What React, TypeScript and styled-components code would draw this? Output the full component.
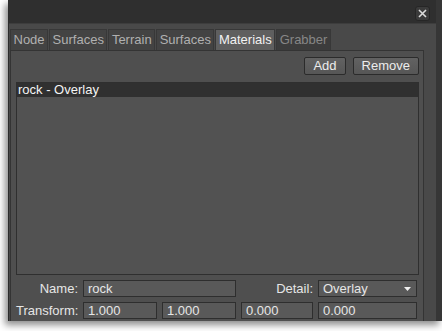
import styled, { createGlobalStyle } from 'styled-components';

const GlobalStyle = createGlobalStyle`
  html, body {
    margin: 0;
    padding: 0;
    background: #ffffff;
  }
  body {
    font-family: 'Liberation Sans', Arial, sans-serif;
    font-size: 13px;
    height: 331px;
  }
`;

const TABS = [
  { label: 'Node', state: 'normal' },
  { label: 'Surfaces', state: 'normal' },
  { label: 'Terrain', state: 'normal' },
  { label: 'Surfaces', state: 'normal' },
  { label: 'Materials', state: 'active' },
  { label: 'Grabber', state: 'disabled' },
] as const;

type TabState = (typeof TABS)[number]['state'];

const App = () => {
  return (
    <>
      <GlobalStyle />
      <Window>
        <TitleBar>
          <CloseButton>
            <svg width="9" height="9" viewBox="0 0 9 9">
              <path d="M1 1L8 8M8 1L1 8" stroke="#dcdcdc" strokeWidth="1.6" />
            </svg>
          </CloseButton>
        </TitleBar>
        <Body>
          <TabBar>
            {TABS.map((tab, i) => (
              <Tab key={i} $state={tab.state}>
                {tab.label}
              </Tab>
            ))}
          </TabBar>
          <Pane>
            <Toolbar>
              <Button>Add</Button>
              <Button>Remove</Button>
            </Toolbar>
            <MaterialList>
              <ListRow $selected>rock - Overlay</ListRow>
            </MaterialList>
            <Form>
              <Label>Name:</Label>
              <Field $span={2}>rock</Field>
              <Label>Detail:</Label>
              <Select>
                <span>Overlay</span>
                <svg width="7" height="4" viewBox="0 0 7 4">
                  <path d="M0 0H7L3.5 4Z" fill="#f0f0f0" />
                </svg>
              </Select>
              <Label>Transform:</Label>
              <Field>1.000</Field>
              <Field>1.000</Field>
              <Field>0.000</Field>
              <Field>0.000</Field>
            </Form>
          </Pane>
        </Body>
      </Window>
    </>
  );
};

export default App;

const Window = styled.div`
  box-sizing: border-box;
  margin-left: 8px;
  width: 434px;
  height: 321px;
  display: flex;
  flex-direction: column;
  background-color: #494949;
  border-left: 1px solid #2c2c2c;
  border-right: 6px solid #363636;
  box-shadow: -3px 4px 7px rgba(0, 0, 0, 0.45);
  overflow: hidden;
`;

const TitleBar = styled.div`
  box-sizing: border-box;
  height: 24px;
  flex-shrink: 0;
  display: flex;
  justify-content: flex-end;
  align-items: flex-start;
  padding: 6px 6px 0 0;
  background-color: #2f2f2f;
  border-bottom: 1px solid #3d3d3d;
`;

const CloseButton = styled.div`
  box-sizing: border-box;
  width: 15px;
  height: 15px;
  display: flex;
  align-items: center;
  justify-content: center;
  background-color: #3b3b3b;
  border: 1px solid #262626;
  border-radius: 3px;
`;

const Body = styled.div`
  flex: 1;
  display: flex;
  flex-direction: column;
  padding: 5px 12px 0 0;
  min-height: 0;
`;

const TabBar = styled.div`
  display: flex;
  gap: 1px;
  height: 21px;
  flex-shrink: 0;
  padding-left: 1px;
`;

const Tab = styled.div<{ $state: TabState }>`
  box-sizing: border-box;
  height: 21px;
  padding: 0 2.5px;
  line-height: 20px;
  border: 1px solid #383838;
  border-bottom: none;
  background-color: ${({ $state }) =>
    $state === 'active' ? '#5f5f5f' : $state === 'disabled' ? '#3c3c3c' : '#434343'};
  color: ${({ $state }) =>
    $state === 'active' ? '#f2f2f2' : $state === 'disabled' ? '#878787' : '#b0b0b0'};
`;

const Pane = styled.div`
  flex: 1;
  display: flex;
  flex-direction: column;
  gap: 7px;
  padding: 6px 4px 0 5px;
  margin-left: 1px;
  background-color: #4f4f4f;
  border: 1px solid #343434;
  border-bottom: none;
  min-height: 0;
`;

const Toolbar = styled.div`
  display: flex;
  justify-content: flex-end;
  gap: 7px;
  padding-right: 0;
`;

const Button = styled.div`
  box-sizing: border-box;
  height: 18px;
  padding: 0 8px;
  line-height: 16px;
  color: #ececec;
  background: linear-gradient(#626262, #565656);
  border: 1px solid #2b2b2b;
  border-radius: 2px;
`;

const MaterialList = styled.div`
  box-sizing: border-box;
  height: 193px;
  background-color: #525252;
  border: 1px solid #2f2f2f;
`;

const ListRow = styled.div<{ $selected?: boolean }>`
  height: 14px;
  line-height: 14px;
  padding-left: 1px;
  color: #f4f4f4;
  background-color: ${({ $selected }) => ($selected ? '#303030' : 'transparent')};
`;

const Form = styled.div`
  display: grid;
  grid-template-columns: 62px 74px 74px 72px 99px;
  column-gap: 5px;
  row-gap: 5px;
  margin-top: -2px;
`;

const Label = styled.div`
  height: 17px;
  line-height: 17px;
  text-align: right;
  color: #e6e6e6;
  white-space: nowrap;
`;

const Field = styled.div<{ $span?: number }>`
  box-sizing: border-box;
  grid-column: span ${({ $span }) => $span ?? 1};
  height: 17px;
  line-height: 15px;
  padding-left: 4px;
  color: #e6e6e6;
  background-color: #595959;
  border: 1px solid #2e2e2e;
`;

const Select = styled.div`
  box-sizing: border-box;
  height: 17px;
  display: flex;
  align-items: center;
  justify-content: space-between;
  padding: 0 5px 0 4px;
  color: #e6e6e6;
  background-color: #595959;
  border: 1px solid #2e2e2e;
`;
